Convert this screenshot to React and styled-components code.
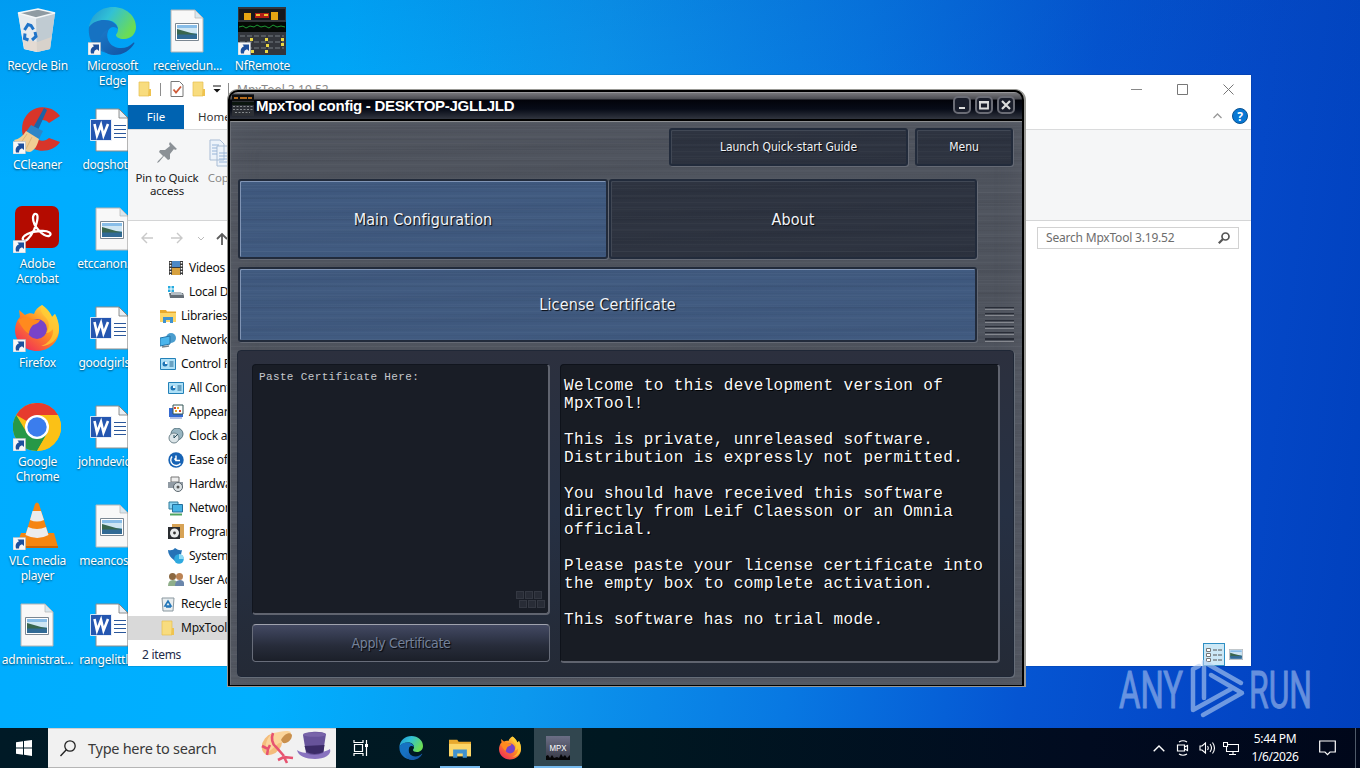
import React from 'react';
import styled, { createGlobalStyle, css } from 'styled-components';

const GlobalStyle = createGlobalStyle`
  * { box-sizing: border-box; }
  body {
    margin: 0;
    overflow: hidden;
    font-family: 'Noto Sans', 'Open Sans', sans-serif;
    font-size: 12px;
  }
  svg { display: block; flex: none; }
`;

// Desktop
const Desktop = styled.div`
  position: relative;
  display: flex;
  flex-direction: column;
  width: 1360px;
  height: 768px;
  overflow: hidden;
  background:
    linear-gradient(180deg, rgba(0, 70, 170, 0.16) 0, rgba(0, 80, 200, 0) 180px),
    linear-gradient(97deg, #00acff 0%, #00b0ff 24%, #0c98ee 42%, #0878e2 60%, #0555d2 76%, #0448c8 88%, #0040bd 100%);
`;

const IconGrid = styled.div`
  flex: 1;
  display: grid;
  grid-template-columns: repeat(4, 75px);
  grid-template-rows: repeat(7, 99px);
  grid-auto-flow: column;
  margin-left: -1px;
`;

const Shortcut = styled.div`
  display: flex;
  flex-direction: column;
  align-items: center;
  gap: 3px;
  padding-top: 7px;
  grid-column: ${(p) => p.$col};
  width: 75px;
`;

const ShortcutLabel = styled.span`
  width: 75px;
  margin-left: ${(p) => 2 - (p.$shift || 0) * 2}px;
  text-align: center;
  font-size: 12px;
  line-height: 15px;
  letter-spacing: -0.22px;
  color: #fff;
  white-space: pre;
  text-shadow: 0 1px 2px rgba(0, 0, 0, 0.6);
`;

// Explorer window
const Explorer = styled.section`
  position: absolute;
  left: 128px;
  top: 75px;
  width: 1123px;
  height: 591px;
  display: flex;
  flex-direction: column;
  background: #fff;
  color: #111;
  box-shadow: 0 0 1px rgba(0, 0, 0, 0.5);
`;

const ExplorerTitle = styled.div`
  height: 30px;
  display: flex;
  align-items: center;
  padding: 0 0 2px 9px;
  color: #8a8a8a;
`;

const QuickAccess = styled.div`
  display: flex;
  align-items: center;
  width: 100px;
  gap: 6.5px;
`;

const Divider = styled.i`
  width: 1px;
  height: 13px;
  background: #8d8d8d;
`;

const Caption = styled.div`
  margin-left: auto;
  display: flex;
  gap: 35px;
  padding-right: 17px;
`;

const RibbonTabs = styled.div`
  height: 24px;
  display: flex;
  align-items: center;
`;

const FileTab = styled.div`
  width: 56px;
  height: 24px;
  padding-bottom: 1px;
  display: flex;
  align-items: center;
  justify-content: center;
  background: #0063b1;
  color: #fff;
  font-size: 11.5px;
`;

const HomeTab = styled.div`
  width: 60px;
  padding: 0 0 1px 14px;
  font-size: 11.5px;
  color: #333;
`;

const TabTools = styled.div`
  margin-left: auto;
  display: flex;
  align-items: center;
  gap: 10px;
  padding: 0 3px 2px 0;
`;

const Ribbon = styled.div`
  height: 92px;
  display: flex;
  background: #f5f6f7;
  border-top: 1px solid #dadbdc;
  border-bottom: 1px solid #d4d5d6;
`;

const RibbonItem = styled.div`
  width: ${(p) => p.$w}px;
  display: flex;
  flex-direction: column;
  align-items: center;
  gap: 4px;
  padding-top: 9px;
  text-align: center;
  font-size: 11.5px;
  line-height: 13px;
  letter-spacing: -0.15px;
  white-space: pre;
  color: ${(p) => p.$color || '#222'};
`;

const NavBar = styled.div`
  height: 34px;
  display: flex;
  align-items: center;
  padding: 0 12px;
`;

const NavArrows = styled.div`
  display: flex;
  align-items: center;
  gap: 14px;
`;

const UpArrow = styled.svg`
  margin-left: -3px;
`;

const SearchBox = styled.div`
  margin-left: auto;
  width: 202px;
  height: 22px;
  display: flex;
  align-items: center;
  justify-content: space-between;
  padding: 0 8px 1px;
  border: 1px solid #d2d2d2;
  color: #6d6d6d;
  letter-spacing: -0.2px;
`;

const Tree = styled.div`
  flex: 1;
  display: flex;
  flex-direction: column;
  padding-top: 1px;
`;

const TreeRow = styled.div`
  height: 24px;
  width: 110px;
  display: flex;
  align-items: center;
  gap: 5px;
  padding: 0 0 1px ${(p) => (p.$deep ? 40 : 32)}px;
  white-space: nowrap;
  letter-spacing: -0.25px;
  background: ${(p) => (p.$active ? '#d9d9d9' : 'transparent')};
`;

const StatusBar = styled.div`
  height: 25px;
  display: flex;
  align-items: flex-end;
  justify-content: space-between;
  padding: 0 4px 0 14px;
  line-height: 23px;
  letter-spacing: -0.3px;
  color: #1e2a4a;
`;

const ViewSwitch = styled.div`
  display: flex;
  align-items: center;
`;

const ViewButton = styled.span`
  width: 22px;
  height: 23px;
  display: flex;
  align-items: center;
  justify-content: center;
  ${(p) =>
    p.$on &&
    css`
      background: #cce8f6;
      border: 1px solid #2f8fc4;
    `}
`;

// MpxTool window
const brushed = css`
  background-image:
    repeating-linear-gradient(180deg, rgba(255, 255, 255, 0.022) 0 1px, transparent 1px 3px, rgba(0, 0, 0, 0.03) 3px 4px, transparent 4px 7px),
    repeating-linear-gradient(180deg, transparent 0 4px, rgba(255, 255, 255, 0.02) 4px 5px, rgba(0, 0, 0, 0.025) 5px 7px, transparent 7px 11px),
    repeating-linear-gradient(178deg, rgba(255, 255, 255, 0.012) 0 6px, rgba(0, 0, 0, 0.02) 13px, rgba(255, 255, 255, 0.012) 23px);
`;

const MpxFrame = styled.section`
  position: absolute;
  left: 227px;
  top: 89px;
  width: 799px;
  height: 598px;
  border: 1px solid #989894;
  border-right-width: 2px;
  border-radius: 11px 11px 0 0;
  background: #000;
  padding: 2px;
  display: flex;
  flex-direction: column;
`;

const MpxTitle = styled.div`
  height: 27px;
  flex: none;
  display: flex;
  align-items: center;
  gap: 2px;
  padding: 0 7px 1px 2px;
  border-radius: 8px 8px 0 0;
  background: linear-gradient(180deg, #b6b6b8 0, #77777b 1px, #4b4c52 7px, #02030a 8px, #070b17 17px, #31353f 27px);
  color: #fff;
  font: bold 15px 'Liberation Sans', Arial, sans-serif;
  letter-spacing: -0.27px;
`;

const TitleButtons = styled.div`
  margin-left: auto;
  display: flex;
  gap: 4px;
`;

const TitleButton = styled.span`
  width: 18px;
  height: 18px;
  border: 2px solid #6a6c75;
  border-radius: 5px;
  background: #1a1e2b;
  display: flex;
  align-items: center;
  justify-content: center;
`;

const MpxBody = styled.div`
  flex: 1;
  margin-top: 2px;
  padding: 6px 8px 8px 7px;
  display: flex;
  flex-direction: column;
  border-top: 1px solid #8d8f92;
  border-left: 1px solid #696d75;
  ${brushed}
  background-color: #4e535d;
  box-shadow: inset 0 0 26px rgba(105, 108, 118, 0.35);
`;

const TopButtons = styled.div`
  display: flex;
  justify-content: flex-end;
  gap: 7px;
  padding-right: 1px;
`;

const plateText = css`
  font-family: 'DejaVu Sans Condensed', Tahoma, 'DejaVu Sans', sans-serif;
  font-stretch: condensed;
  color: #f2f4f8;
  text-shadow: 1px 1px 1px #05070c;
`;

const Plate = styled.div`
  display: flex;
  align-items: center;
  justify-content: center;
  width: ${(p) => p.$w}px;
  height: ${(p) => p.$h}px;
  font-size: ${(p) => p.$size || 16}px;
  letter-spacing: ${(p) => p.$ls || 0}px;
  border-radius: 3px;
  border: 2px solid #222b3b;
  ${plateText}
  ${brushed}
  ${(p) =>
    p.$blue
      ? css`
          background-color: #3f597f;
          box-shadow: inset 1px 1px 0 #8094b4, 1px 1px 0 #656a75;
        `
      : css`
          background-color: #2c323f;
          box-shadow: inset 1px 1px 0 #414855, 1px 1px 0 #656a75;
        `}
`;

const TabRow = styled.div`
  display: flex;
  margin-top: 13px;
  gap: 1px;
`;

const SectionRow = styled.div`
  display: flex;
  align-items: flex-end;
  gap: 8px;
  margin-top: 8px;
`;

const Grip = styled.div`
  width: 29px;
  height: 35px;
  background: repeating-linear-gradient(180deg, #292d37 0 1px, transparent 1px 2px, #85888f 2px 3px, transparent 3px 6.3px);
`;

const Panel = styled.div`
  flex: none;
  height: 327px;
  width: 777px;
  margin: 8px 0 0 -1px;
  display: flex;
  gap: 10px;
  padding: 13px 13px 14px 14px;
  border-radius: 4px;
  border: 1px solid #1f2736;
  background: linear-gradient(180deg, #2c303e, #263043 50%, #242a36);
  box-shadow: 1px 1px 0 #666d78;
`;

const LeftColumn = styled.div`
  display: flex;
  flex-direction: column;
  gap: 9px;
`;

const CertificateBox = styled.div`
  width: 298px;
  height: 251px;
  display: flex;
  flex-direction: column;
  justify-content: space-between;
  align-items: flex-start;
  padding: 6px 3px 5px 6px;
  border-radius: 4px;
  border: 1px solid #11151e;
  border-right: 2px solid #60646f;
  border-bottom: 2px solid #60646f;
  background: #191d26;
  color: #c6c8cd;
  font: 11px/13px 'Liberation Mono', 'Courier New', monospace;
  letter-spacing: 0.36px;
  white-space: pre;
`;

const CornerGrip = styled.div`
  align-self: flex-end;
  display: grid;
  grid-template-columns: repeat(3, 8px);
  gap: 1px;
  padding-right: 3px;
`;

const Dot = styled.i`
  width: 8px;
  height: 8px;
  border: 1px solid #343842;
  background: #282c36;
  transform: translateX(${(p) => (p.$shift ? 3 : 0)}px);
`;

const ApplyButton = styled.div`
  width: 298px;
  height: 38px;
  display: flex;
  align-items: center;
  justify-content: center;
  border: 1px solid #686d7a;
  border-top-color: #a0a3ae;
  border-radius: 4px;
  background: linear-gradient(180deg, #444a62 0, #353b50 28%, #272c3a 58%, #1b1f29 100%);
  ${plateText}
  font-size: 14px;
  letter-spacing: -0.36px;
  color: #75829a;
`;

const Message = styled.div`
  width: 441px;
  height: 299px;
  padding: 12px 0 0 3px;
  border-radius: 4px;
  border: 1px solid #0e121a;
  border-right: 2px solid #60646f;
  border-bottom: 2px solid #60646f;
  background: #181c24;
  color: #fafafa;
  font: 16px/18px 'Liberation Mono', 'Courier New', monospace;
  letter-spacing: 0.38px;
  white-space: pre;
  text-shadow: 1px 1px 0 #000;
`;

// Watermark
const Watermark = styled.svg`
  position: absolute;
  left: 1115px;
  top: 650px;
  opacity: 0.6;
`;

// Taskbar
const Taskbar = styled.footer`
  height: 40px;
  display: flex;
  align-items: stretch;
  background: linear-gradient(90deg, #001a26 0%, #001821 45%, #010b20 80%, #00071a 100%);
  color: #fff;
`;

const TaskButton = styled.div`
  width: ${(p) => p.$w || 49}px;
  display: flex;
  align-items: center;
  justify-content: center;
  background: ${(p) => (p.$active ? '#31464f' : 'transparent')};
  ${(p) => p.$open && css`box-shadow: inset 0 -2px 0 #76b9ed;`}
`;

const TaskSearch = styled.div`
  width: 288px;
  display: flex;
  align-items: center;
  padding: 0 4px 0 12px;
  background: #f1f1f1;
  border-top: 1px solid #cfcfcf;
  border-bottom: 1px solid #b5b5b5;
  color: #3a3a3a;
  font-size: 14.5px;
  letter-spacing: -0.27px;
`;

const SearchText = styled.span`
  margin-left: 12px;
  flex: 1;
`;

const Tray = styled.div`
  margin-left: auto;
  display: flex;
  align-items: center;
`;

const TrayIcon = styled.span`
  width: 24px;
  display: flex;
  justify-content: center;
`;

const Clock = styled.div`
  width: 64px;
  text-align: center;
  font-size: 12px;
  line-height: 18px;
  letter-spacing: -0.4px;
  white-space: pre;
`;

const Notify = styled.span`
  width: 40px;
  display: flex;
  justify-content: center;
`;

const ShowDesktop = styled.i`
  width: 5px;
  height: 40px;
  margin-left: 8px;
  border-left: 1px solid #4f5a69;
`;

// Drawings
const ShortcutArrow = () => (
  <g>
    <path d="M0 35.500h12.500V48H0z" fill="#f7f7f7" stroke="#b4bcc6" strokeWidth=".6" />
    <path d="M3 46.500c-1-4 .5-6 3-7.200L4.500 37.500H11V44l-2-1.800c-2.200.8-3 2-3 4.300z" fill="#1d4f9c" />
  </g>
);

const Art = ({ arrow, children }) => (
  <svg width="48" height="48" viewBox="0 0 48 48">
    {children}
    {arrow && <ShortcutArrow />}
  </svg>
);

const RecycleShape = () => (
  <g>
    <path d="M5 6 25 2l17 4-5 36-13 3-13-3z" fill="#dfe5e9" />
    <path d="m5 6 18 5 1 34-13-3z" fill="#e6ebee" />
    <path d="m23 11 19-5-5 36-13 3z" fill="#c0cbd2" />
    <path d="M5 6 25 2l17 4-19 5z" fill="#8f9ba2" stroke="#f4f7f8" strokeWidth="1.500" />
    <path d="m9.500 31 2 11 13 3 12.500-3 1.500-12-14 5z" fill="#e3d4c8" opacity=".7" />
    <path d="m11.500 23 3.500-5.500 3 1 2.500 4M22 25l1 4.500-4 3.500M15.500 33l-4-1.500.5-5" fill="none" stroke="#1f74c9" strokeWidth="3" />
  </g>
);

const EdgeShape = () => (
  <g>
    <defs>
      <linearGradient id="edgeTop" x1="0" y1="0" x2="1" y2=".5">
        <stop offset="0" stopColor="#1f93d2" />
        <stop offset=".45" stopColor="#31c1d6" />
        <stop offset="1" stopColor="#6bdc55" />
      </linearGradient>
      <linearGradient id="edgeLow" x1="0" y1="0" x2="1" y2="1">
        <stop offset="0" stopColor="#1b79c9" />
        <stop offset="1" stopColor="#114f9e" />
      </linearGradient>
    </defs>
    <path d="M1 21C2 9 12 0 25 0c13 0 23 9 23 20 0 7-5 12-12 12-5 0-8-2-8-4 0-1 2-2 2-6 0-5-5-9-12-9C10 13 4 17 1 21z" fill="url(#edgeTop)" />
    <path d="M1 20c4-5 9-7 15-7 8 0 13 4 14 9-3-3-8-3-10 2-3 8 3 16 11 19 2 1 0 4-5 4C11 47-1 36 1 20z" fill="#1672c2" />
    <path d="M20 23c-4 10 3 18 13 18 5 0 9-2 12-5 1-1 2 0 1 1-4 6-10 11-20 11-8 0-14-6-14-14 0-5 3-9 8-11z" fill="url(#edgeLow)" />
  </g>
);

const PictureShape = ({ x = 0, y = 0, w = 24, h = 18 }) => (
  <svg x={x} y={y} width={w} height={h} viewBox="0 0 24 18" preserveAspectRatio="none">
    <path d="M.5.500h23v17H.5z" fill="#fff" stroke="#7b8792" />
    <path d="M2 2h20v14H2z" fill="#88bde8" />
    <path d="M2 5h20v5H2z" fill="#cfe6f3" />
    <path d="m2 6 7 2 7 2 6 1v2H2z" fill="#39664f" />
    <path d="M2 11.500h20V16H2z" fill="#316a95" />
  </svg>
);

const ImageFile = () => (
  <Art>
    <path d="M8 3h24l8 8v34H8z" fill="#f8f8f8" stroke="#b4b4b4" />
    <path d="M32 3v8h8z" fill="#d8e6ee" stroke="#b4b4b4" strokeWidth=".7" />
    <PictureShape x={12} y={16} />
  </Art>
);

const WordFile = () => (
  <Art>
    <path d="M8 3h23l9 9v33H8z" fill="#fff" stroke="#8c8c8c" />
    <path d="M31 3v9h9z" fill="#e7eef4" stroke="#777" strokeWidth=".8" />
    <path d="M26 19.500h12M26 23.500h12M26 27.500h12M26 31.500h12" stroke="#2b579a" />
    <path d="M2.500 13.500h21v21h-21z" fill="#2456b0" stroke="#fff" strokeWidth=".8" />
    <path d="m6.500 18 2.500 11.500 4-10.500 2.500 10.500L20 18" fill="none" stroke="#fff" strokeWidth="2.600" />
  </Art>
);

const RackShape = () => (
  <g>
    <path d="M0 0h48v48H0z" fill="#33363c" />
    <path d="M1 2h46v11H1z" fill="#17181c" />
    <path d="M6 6h7v7H6zM33 5h7v8h-7z" fill="#e7a512" />
    <path d="M17 6h14v5H17z" fill="#b21e17" />
    <path d="M18 8h12" stroke="#f3c22e" strokeWidth="2" strokeDasharray="4 4" />
    <path d="M0 15h48v10H0z" fill="#050906" />
    <path d="m1 20 4-1 3 2 4-2 4 1 3-2 4 2 4-1 4 2 4-3 4 2 4-1 4 1" fill="none" stroke="#1c9a35" />
    <path d="M2 29h44M2 35h44M2 41h44" stroke="#777c82" strokeDasharray="5 2" />
    <path d="M27 31h3v3h-3zM43 31h3v3h-3zM43 36h3v3h-3zM28 37h3v3h-3zM27 43h3v3h-3zM12 31h3v3h-3zM13 43h3v3h-3z" fill="#e9d643" />
  </g>
);

// Same rack at caption size, where only the rows stay readable
const RackSmall = () => (
  <svg width="22" height="22" viewBox="0 0 22 22">
    <path d="M0 0h22v22H0z" fill="#2c2f35" />
    <path d="M0 1h22v6H0z" fill="#0d0e10" />
    <path d="M2 4h4M8 4h7M16 4h4" stroke="#b26a1d" strokeWidth="2" />
    <path d="M0 8h22v3H0z" fill="#0b150e" />
    <path d="M1 12.500h20M1 15.500h20M3 18.500h15" stroke="#85898c" strokeDasharray="2 1.500" />
  </svg>
);

const FirefoxShape = () => (
  <g>
    <defs>
      <linearGradient id="fox" x1=".9" y1=".1" x2=".2" y2="1">
        <stop offset="0" stopColor="#ffe14a" />
        <stop offset=".45" stopColor="#ff8b22" />
        <stop offset="1" stopColor="#f0295b" />
      </linearGradient>
    </defs>
    <path d="M29 1c8 6 10 12 10 12l3-3c3 6 4 11 4 16 0 12-10 21-22 21S2 38 2 26c0-5 2-10 5-13l-1-7 6 5c3-2 7-2 9-1 1-4 4-7 8-9z" fill="url(#fox)" />
    <circle cx="24" cy="25" r="10" fill="#7843c9" />
    <path d="M5 16c5-3 9-4 14-1l8 1c-1 3-4 4-7 5-2 2-4 5-4 9-4-2-8-8-11-14z" fill="#ff8a1e" />
    <path d="M29 1c-3 7 1 9 5 14 3 4 2 11-1 14 4 0 7-4 7-4 1 8-5 15-12 17 10 0 17-7 18-16 0-6-1-11-4-16l-3 3S37 6 29 1z" fill="#ffcf34" opacity=".75" />
  </g>
);

const FolderShape = ({ w = 16, h = 16 }) => (
  <svg width={w} height={h} viewBox="0 0 16 16">
    <path d="M2 1h10v14H2z" fill="#f8dc7e" stroke="#e7bf4e" strokeWidth=".7" />
    <path d="M12 8h2v7h-3z" fill="#efc34f" />
  </svg>
);

const LibraryShape = ({ s = 16 }) => (
  <svg width={s} height={s} viewBox="0 0 16 16">
    <path d="M0 2h6l1 1.500h9V14H0z" fill="#e8a92d" />
    <path d="M0 5h16v9H0z" fill="#fcd668" />
    <path d="M3 15V9h10v6h-3v-3H6v3z" fill="#3f92cf" />
  </svg>
);

const art = {
  recycle: <Art><RecycleShape /></Art>,
  edge: <Art arrow><EdgeShape /></Art>,
  image: <ImageFile />,
  word: <WordFile />,
  nf: <Art arrow><RackShape /></Art>,
  firefox: <Art arrow><FirefoxShape /></Art>,
  ccleaner: (
    <Art arrow>
      <path d="M47 10 36 17c-3-4-10-4-13 0-3 4-3 11 0 15 4 4 10 3 13 0l11 4c-5 8-17 11-26 7C11 38 7 27 10 16 14 4 25-1 35 2c5 1 9 4 12 8z" fill="#d8352a" />
      <path d="m31 2 3 2-9 20-5-2z" fill="#1d63a5" />
      <path d="m18 19 12 6-4 8-13-7z" fill="#2d86c8" />
      <path d="M13 25 26 33c-2 7-4 11-9 13-7 0-12-5-16-12 5-1 9-4 12-9z" fill="#f0cd94" />
      <path d="M14 28 7 38m12-7-6 12" stroke="#dcb478" />
    </Art>
  ),
  acrobat: (
    <Art arrow>
      <rect x="2" y="1" width="44" height="42" rx="7" fill="#b40b00" />
      <path d="M22 9c4-1 3 7-1 16-4 8-9 13-11 10-2-4 8-9 17-9 9-1 13 3 9 5-5 1-16-9-16-18 0-2 1-4 2-4z" fill="none" stroke="#fff" strokeWidth="2.300" />
    </Art>
  ),
  chrome: (
    <Art arrow>
      <circle cx="24" cy="24" r="24" fill="#fbc116" />
      <path d="M24 24 3.200 12A24 24 0 0 1 44.800 12z" fill="#e63b2e" />
      <path d="M24 12h20.800A24 24 0 0 0 24 0z" fill="#e63b2e" />
      <path d="M3.200 12A24 24 0 0 0 24 48l10.400-18L24 24l-10 6z" fill="#279847" />
      <path d="M24 48A24 24 0 0 0 44.800 12H24l10.400 18z" fill="#fbc116" />
      <circle cx="24" cy="24" r="12" fill="#fff" />
      <circle cx="24" cy="24" r="9.700" fill="#3b7ded" />
    </Art>
  ),
  vlc: (
    <Art arrow>
      <path d="M8 31h33l4 14H3z" fill="#f48510" />
      <path d="M22 2q2-3 4 0l10 32q-12 6-24 0z" fill="#f68512" />
      <path d="m19.500 9 8.500 0 3 9q-7 3-14 0zM15 25q9 4 18 0l2.500 8q-11 6-23 0z" fill="#ececec" />
      <path d="M3 45h42" stroke="#cb6405" strokeWidth="2" />
    </Art>
  ),
};

const shortcuts = [
  [1, 'recycle', 'Recycle Bin'],
  [1, 'ccleaner', 'CCleaner'],
  [1, 'acrobat', 'Adobe\nAcrobat'],
  [1, 'firefox', 'Firefox'],
  [1, 'chrome', 'Google\nChrome'],
  [1, 'vlc', 'VLC media\nplayer'],
  [1, 'image', 'administrat...'],
  [2, 'edge', 'Microsoft\nEdge'],
  [2, 'word', 'dogshot...', 3],
  [2, 'image', 'etccanon...', 6],
  [2, 'word', 'goodgirlsf...', 2],
  [2, 'word', 'johndevic...', 4],
  [2, 'image', 'meancost...', 2],
  [2, 'word', 'rangelittle...', 1],
  [3, 'image', 'receivedun...'],
  [4, 'nf', 'NfRemote'],
];

const panelIcon = (
  <g>
    <path d="M.5 2.500h15v11H.5z" fill="#aee0f7" stroke="#2381b8" />
    <circle cx="5" cy="8" r="2.500" fill="#1e75b5" />
    <path d="M5 8V5.500A2.500 2.500 0 0 1 7.500 8z" fill="#fff" />
    <path d="M9.500 6h4M9.500 8h4M9.500 10h4" stroke="#24658e" />
  </g>
);

const treeArt = {
  videos: (
    <g>
      <path d="M1 1h14v14H1z" fill="#383838" />
      <path d="M4 1h8v6H4z" fill="#4c88c5" />
      <path d="M4 8h8v7H4z" fill="#d6a03e" />
      <path d="M2.500 2v13M13.500 2v13" stroke="#fff" strokeWidth="1.500" strokeDasharray="1.500 1.500" />
    </g>
  ),
  disk: (
    <g>
      <path d="M1 9h14l1 3v2H2z" fill="#666f77" />
      <path d="m3 8 10 0 2 3H3z" fill="#b5bec5" />
      <path d="M0 2h2.500v2.500H0zM3.500 2H6v2.500H3.500zM0 5.500h2.500V8H0zM3.500 5.500H6V8H3.500z" fill="#25abe0" />
    </g>
  ),
  network: (
    <g>
      <circle cx="11" cy="6" r="5" fill="#4b9dce" />
      <path d="m0 6 10-2v8L0 14z" fill="#4bb5ec" stroke="#2475a9" />
      <path d="m2 15 7-1" stroke="#76828b" strokeWidth="1.500" />
    </g>
  ),
  control: panelIcon,
  appearance: (
    <g>
      <path d="M1 4h14v9H1z" fill="#356ad0" />
      <path d="M5 1h10v9H5z" fill="#fff" stroke="#355" />
      <path d="M6 3h2v2H6zM11 6h2v2h-2z" fill="#d34332" />
      <path d="M9 3h2v2H9zM7 6h2v2H7z" fill="#e5aa24" />
      <path d="M2 13h12v2H2z" fill="#b3bfe3" />
    </g>
  ),
  clock: (
    <g>
      <circle cx="9" cy="6" r="6" fill="#98b5c1" stroke="#587580" />
      <circle cx="6" cy="10" r="5" fill="#dce5e8" stroke="#70858d" />
      <path d="M6 7v3l4-4" stroke="#284d5c" fill="none" />
    </g>
  ),
  ease: (
    <g>
      <circle cx="8" cy="8" r="7.700" fill="#1763b5" />
      <path d="M8 3.500v5h4M6.500 6.500 8 8.500M4 4.500a5.200 5.200 0 1 0 8.500 7" fill="none" stroke="#fff" strokeWidth="1.400" />
    </g>
  ),
  hardware: (
    <g>
      <path d="M3 1h8v5H3z" fill="#eee" stroke="#777" />
      <path d="M0 6h15v6H0z" fill="#919ba4" />
      <circle cx="10" cy="11" r="4.500" fill="#dce2e5" stroke="#5b666d" />
      <circle cx="10" cy="11" r="1.500" fill="#555" />
    </g>
  ),
  netint: (
    <g>
      <path d="M1 2h9v7H1z" fill="#8ad3f2" stroke="#317c9b" />
      <path d="M4.500 4.500h10v7.500h-10z" fill="#46b3e5" stroke="#246f9c" />
      <path d="M2 14.500h12" stroke="#50a460" strokeWidth="2" />
    </g>
  ),
  programs: (
    <g>
      <path d="M4 0h12v14H4z" fill="#d7a356" />
      <path d="M0 3h12v12H0z" fill="#292c30" />
      <circle cx="6.500" cy="9" r="4.500" fill="#e9ebec" />
      <circle cx="6.500" cy="9" r="1.400" fill="#333" />
    </g>
  ),
  system: (
    <g>
      <path d="M0 2q5 1 7-2 4 3 7 2-1 8-7 11-7-5-7-11z" fill="#2673b7" />
      <circle cx="11" cy="11" r="4.800" fill="#2ea9df" />
      <path d="M11 11V6a5 5 0 0 1 5 5z" fill="#8cdaf5" />
    </g>
  ),
  users: (
    <g>
      <circle cx="4.500" cy="4.500" r="3.500" fill="#8b6841" />
      <circle cx="11.500" cy="4.500" r="3.500" fill="#bb8253" />
      <path d="M0 14q0-6 5-6t5 6z" fill="#8fae8a" />
      <path d="M7 14q0-6 5-6t4 6z" fill="#6a86ab" />
    </g>
  ),
  bin: (
    <g>
      <path d="M2 2h12l-1 13H3z" fill="#e8edef" stroke="#89979f" />
      <path d="m5 10 3-5 3 5zm1 1h5" fill="none" stroke="#2276b9" strokeWidth="1.600" />
    </g>
  ),
};

const tree = [
  ['videos', 'Videos', true],
  ['disk', 'Local Disk', true],
  ['libraries', 'Libraries'],
  ['network', 'Network'],
  ['control', 'Control Panel'],
  ['control', 'All Control', true],
  ['appearance', 'Appearance', true],
  ['clock', 'Clock and', true],
  ['ease', 'Ease of', true],
  ['hardware', 'Hardware', true],
  ['netint', 'Network', true],
  ['programs', 'Programs', true],
  ['system', 'System', true],
  ['users', 'User Acco', true],
  ['bin', 'Recycle Bin'],
  ['folder', 'MpxTool'],
];

const TreeIcon = ({ name }) => {
  if (name === 'folder') return <FolderShape />;
  if (name === 'libraries') return <LibraryShape />;
  return <svg width="16" height="16" viewBox="0 0 16 16">{treeArt[name]}</svg>;
};

const message = `Welcome to this development version of
MpxTool!

This is private, unreleased software.
Distribution is expressly not permitted.

You should have received this software
directly from Leif Claesson or an Omnia
official.

Please paste your license certificate into
the empty box to complete activation.

This software has no trial mode.`;

const ExplorerWindow = () => (
  <Explorer>
    <ExplorerTitle>
      <QuickAccess>
        <FolderShape />
        <Divider />
        <svg width="17" height="16" viewBox="-3 0 17 16">
          <path d="M1 .500h8.500L13 4v11.500H1z" fill="#fff" stroke="#777" />
          <path d="m3.500 8.500 2.500 3 5-6" fill="none" stroke="#cf5b39" strokeWidth="1.800" />
        </svg>
        <FolderShape />
        <svg width="8" height="8" viewBox="0 0 8 8">
          <path d="M0 1h8" stroke="#111" />
          <path d="M.5 4h7L4 7.500z" fill="#111" />
        </svg>
        <Divider />
      </QuickAccess>
      <span>MpxTool 3.19.52</span>
      <Caption>
        <svg width="11" height="11"><path d="M0 5.500h11" stroke="#888" /></svg>
        <svg width="11" height="11"><path d="M.5.500h10v10H.5z" fill="none" stroke="#777" /></svg>
        <svg width="11" height="11"><path d="m.5.500 10 10m0-10-10 10" stroke="#777" /></svg>
      </Caption>
    </ExplorerTitle>
    <RibbonTabs>
      <FileTab>File</FileTab>
      <HomeTab>Home</HomeTab>
      <TabTools>
        <svg width="9" height="6"><path d="m.5 5 4-4 4 4" fill="none" stroke="#999" strokeWidth="1.300" /></svg>
        <svg width="16" height="16" viewBox="0 0 16 16">
          <circle cx="8" cy="8" r="7.500" fill="#0878d4" stroke="#0a5190" />
          <text x="8" y="12.500" textAnchor="middle" fill="#fff" fontSize="12" fontWeight="bold">?</text>
        </svg>
      </TabTools>
    </RibbonTabs>
    <Ribbon>
      <RibbonItem $w={78}>
        <svg width="28" height="28" viewBox="0 0 28 28">
          <path d="m17 3 7 7-2 1-1-1-4 5 0 5-2 1-4-4-5 6-2 1 1-2 5-5-4-4 1-2h5l5-4-1-2z" fill="#8b9196" />
        </svg>
        {'Pin to Quick\naccess'}
      </RibbonItem>
      <RibbonItem $w={30} $color="#888">
        <svg width="28" height="28" viewBox="3 0 28 28">
          <path d="M6 1h10l4 4v16H6zM13 7h10l4 4v16H13z" fill="#edf3fa" stroke="#a9bdd5" />
          <path d="M8 6h7M8 9h5M8 12h5M8 15h5M15 14h10M15 17h10M15 20h10M15 23h10" stroke="#97b4d8" />
        </svg>
        Copy
      </RibbonItem>
    </Ribbon>
    <NavBar>
      <NavArrows>
        <svg width="14" height="12"><path d="M13 6H2m5-5L2 6l5 5" fill="none" stroke="#c9c9c9" strokeWidth="1.400" /></svg>
        <svg width="16" height="12" viewBox="-2 0 16 12"><path d="M1 6h11M7 1l5 5-5 5" fill="none" stroke="#c9c9c9" strokeWidth="1.400" /></svg>
        <svg width="7" height="5"><path d="m0 1 3 3 3-3" fill="none" stroke="#bbb" /></svg>
        <UpArrow width="12" height="13"><path d="M6 13V2M1 7l5-5 5 5" fill="none" stroke="#5c5c5c" strokeWidth="1.800" /></UpArrow>
      </NavArrows>
      <SearchBox>
        Search MpxTool 3.19.52
        <svg width="12" height="12" viewBox="0 0 12 12">
          <circle cx="7.500" cy="4.500" r="3.500" fill="none" stroke="#555" strokeWidth="1.700" />
          <path d="M5 7 .800 11.200" stroke="#555" strokeWidth="2.200" />
        </svg>
      </SearchBox>
    </NavBar>
    <Tree>
      {tree.map(([icon, label, deep]) => (
        <TreeRow key={icon + label} $deep={deep} $active={label === 'MpxTool'}>
          <TreeIcon name={icon} />
          {label}
        </TreeRow>
      ))}
    </Tree>
    <StatusBar>
      2 items
      <ViewSwitch>
        <ViewButton $on>
          <svg width="16" height="14" viewBox="0 0 16 14">
            <path d="M.5.500h4v3h-4zM.5 5.500h4v3h-4zM.5 10.500h4v3h-4z" fill="#fff" stroke="#777" />
            <path d="M7 2h9M7 7h9M7 12h9" stroke="#555" strokeDasharray="4 1" />
          </svg>
        </ViewButton>
        <ViewButton>
          <svg width="14" height="11"><PictureShape w={14} h={11} /></svg>
        </ViewButton>
      </ViewSwitch>
    </StatusBar>
  </Explorer>
);

const MpxWindow = () => (
  <MpxFrame>
    <MpxTitle>
      <RackSmall />
      MpxTool config - DESKTOP-JGLLJLD
      <TitleButtons>
        <TitleButton>
          <svg width="10" height="10"><path d="M2 8h6" stroke="#ddd" strokeWidth="2" /></svg>
        </TitleButton>
        <TitleButton>
          <svg width="10" height="10"><path d="M1 2.500h8v6H1z" fill="none" stroke="#ddd" strokeWidth="1.800" /><path d="M0 2h10" stroke="#ddd" strokeWidth="2" /></svg>
        </TitleButton>
        <TitleButton>
          <svg width="10" height="10"><path d="m1 1 8 8m0-8L1 9" stroke="#ddd" strokeWidth="2.200" /></svg>
        </TitleButton>
      </TitleButtons>
    </MpxTitle>
    <MpxBody>
      <TopButtons>
        <Plate $w={239} $h={38} $size={12}>Launch Quick-start Guide</Plate>
        <Plate $w={98} $h={38} $size={12}>Menu</Plate>
      </TopButtons>
      <TabRow>
        <Plate $w={370} $h={80} $ls={0.12} $blue>Main Configuration</Plate>
        <Plate $w={368} $h={80} $ls={0.12}>About</Plate>
      </TabRow>
      <SectionRow>
        <Plate $w={739} $h={75} $ls={0.15} $blue>License Certificate</Plate>
        <Grip />
      </SectionRow>
      <Panel>
        <LeftColumn>
          <CertificateBox>
            Paste Certificate Here:
            <CornerGrip>
              <Dot /><Dot /><Dot />
              <Dot $shift /><Dot $shift /><Dot $shift />
            </CornerGrip>
          </CertificateBox>
          <ApplyButton>Apply Certificate</ApplyButton>
        </LeftColumn>
        <Message>{message}</Message>
      </Panel>
    </MpxBody>
  </MpxFrame>
);

const App = () => (
  <>
    <GlobalStyle />
    <Desktop>
      <IconGrid>
        {shortcuts.map(([col, icon, label, shift]) => (
          <Shortcut key={label} $col={col}>
            {art[icon]}
            <ShortcutLabel $shift={shift}>{label}</ShortcutLabel>
          </Shortcut>
        ))}
      </IconGrid>

      <ExplorerWindow />
      <MpxWindow />

      <Watermark width="245" height="76" viewBox="0 -5 245 76" fill="none">
        <g fill="#a9c2ef" stroke="#a9c2ef" strokeWidth="1" fontFamily="Roboto, sans-serif" fontSize="52">
          <text x="4" y="53" textLength="64" lengthAdjust="spacingAndGlyphs">ANY</text>
          <text x="134" y="53" textLength="63" lengthAdjust="spacingAndGlyphs">RUN</text>
        </g>
        <g stroke="#b6d0f3" strokeWidth="4.500" strokeLinejoin="round" strokeLinecap="round">
          <path d="m84 11-6 3v41l38-21" />
          <path d="M89 43V7l37 21" />
          <path d="m88 60 39-22-31-18" />
        </g>
      </Watermark>

      <Taskbar>
        <TaskButton $w={48}>
          <svg width="16" height="16" viewBox="0 0 16 16">
            <path d="M0 2.300 7 1.300v6.300H0zM8 1.100 16 0v7.600H8zM0 8.500h7v6.200l-7-1zM8 8.500h8V16l-8-1.200z" fill="#fff" />
          </svg>
        </TaskButton>
        <TaskSearch>
          <svg width="16" height="17" viewBox="0 0 16 17">
            <circle cx="10" cy="6" r="5.200" fill="none" stroke="#222" strokeWidth="1.300" />
            <path d="M6.300 9.700.500 16" stroke="#222" strokeWidth="1.400" />
          </svg>
          <SearchText>Type here to search</SearchText>
          <svg width="72" height="34" viewBox="0 0 72 34">
            <ellipse cx="12" cy="13" rx="12" ry="9" transform="rotate(-52 12 13)" fill="#f4bd7c" />
            <path d="M13 2c8-1 17-4 18 0-1 6-7 10-12 10-5 4-9 8-13 11C5 14 6 7 13 2z" fill="#fbd59c" />
            <path d="M21 9c3-6 9-9 11-5 0 5-5 9-9 8z" fill="#c9904d" />
            <path d="M13 2c-2 5-1 11 3 14l8 9" fill="none" stroke="#e75370" strokeWidth="2.600" />
            <path d="m2 15 6 3 2-4M8 18l-1 6M24 26l9 1m-9-1 3 6m-3-6-6 3" stroke="#e75370" strokeWidth="2.600" fill="none" />
            <path d="M37 19c6 5 26 4 33-1 2 6-6 10-15 10s-17-3-18-9z" fill="#8973bf" />
            <path d="M43 4c5-4 19-4 23-1l-3 19q-9 4-17 0z" fill="#67539a" />
            <path d="m44.500 15 20-1-1 7q-9 4-17 0z" fill="#3b2b67" />
            <ellipse cx="54.500" cy="3.500" rx="11.500" ry="2.300" fill="#7964a9" />
          </svg>
        </TaskSearch>
        <TaskButton $w={50}>
          <svg width="18" height="18" viewBox="0 0 18 18">
            <path d="M2 1v2.500h9V1M2 17v-2.500h9V17M2.500 5.500h8v7h-8zM14.500 1v16" fill="none" stroke="#fff" strokeWidth="1.200" />
            <path d="M13 5h3v3h-3z" fill="#fff" />
          </svg>
        </TaskButton>
        <TaskButton $w={50}><svg width="24" height="24" viewBox="0 0 48 48"><EdgeShape /></svg></TaskButton>
        <TaskButton $w={4} />
        <TaskButton $w={40} $open><LibraryShape s={22} /></TaskButton>
        <TaskButton $w={5} />
        <TaskButton><svg width="24" height="24" viewBox="0 0 48 48"><FirefoxShape /></svg></TaskButton>
        <TaskButton $w={48} $active $open>
          <svg width="24" height="24" viewBox="0 0 24 24">
            <defs>
              <linearGradient id="mpxBg" x1="0" y1="0" x2="0" y2="1">
                <stop offset="0" stopColor="#6c6f86" />
                <stop offset="1" stopColor="#373946" />
              </linearGradient>
            </defs>
            <path d="M0 0h24v24H0z" fill="url(#mpxBg)" />
            <path d="m0 20 2-1 2 3 2-3 2 3 3-1 2 1 2-4 2 3 2-2 2 3 3-3v5H0z" fill="#050507" />
            <text x="12" y="15" textAnchor="middle" textLength="17" lengthAdjust="spacingAndGlyphs" fill="#fff" fontSize="9" fontFamily="Liberation Sans, sans-serif">MPX</text>
          </svg>
        </TaskButton>
        <Tray>
          <TrayIcon>
            <svg width="12" height="7"><path d="m.7 6.300 5.300-5.300 5.300 5.300" fill="none" stroke="#fff" strokeWidth="1.400" /></svg>
          </TrayIcon>
          <TrayIcon>
            <svg width="14" height="16" viewBox="0 0 14 16">
              <path d="M1.500 5h7v6h-7zM8.500 7l3-1.500v5L8.500 9M3 2q4-2.500 8 0M3 14q4 2.500 8 0" fill="none" stroke="#fff" strokeWidth="1.200" />
            </svg>
          </TrayIcon>
          <TrayIcon>
            <svg width="17" height="14" viewBox="0 0 17 14">
              <path d="M1 5h2l3.500-3v10L3 9H1zM8.500 5q1.500 2 0 4M11 3q3 4 0 8M13.500 1.500q4 5.500 0 11" fill="none" stroke="#fff" strokeWidth="1.100" />
            </svg>
          </TrayIcon>
          <TrayIcon>
            <svg width="16" height="15" viewBox="0 0 16 15">
              <path d="M5 3.500h10.500v7H3.500V6M.5 1.500h4v4h-4zM10 11v2.500M6 13.500h7" fill="none" stroke="#fff" strokeWidth="1.100" />
            </svg>
          </TrayIcon>
          <Clock>{'5:44 PM\n1/6/2026'}</Clock>
          <Notify>
            <svg width="17" height="16" viewBox="0 0 17 16">
              <path d="M.7 1h15.600v11H11l-2.500 2.700L6 12H.7z" fill="none" stroke="#fff" strokeWidth="1.200" />
            </svg>
          </Notify>
          <ShowDesktop />
        </Tray>
      </Taskbar>
    </Desktop>
  </>
);

export default App;
